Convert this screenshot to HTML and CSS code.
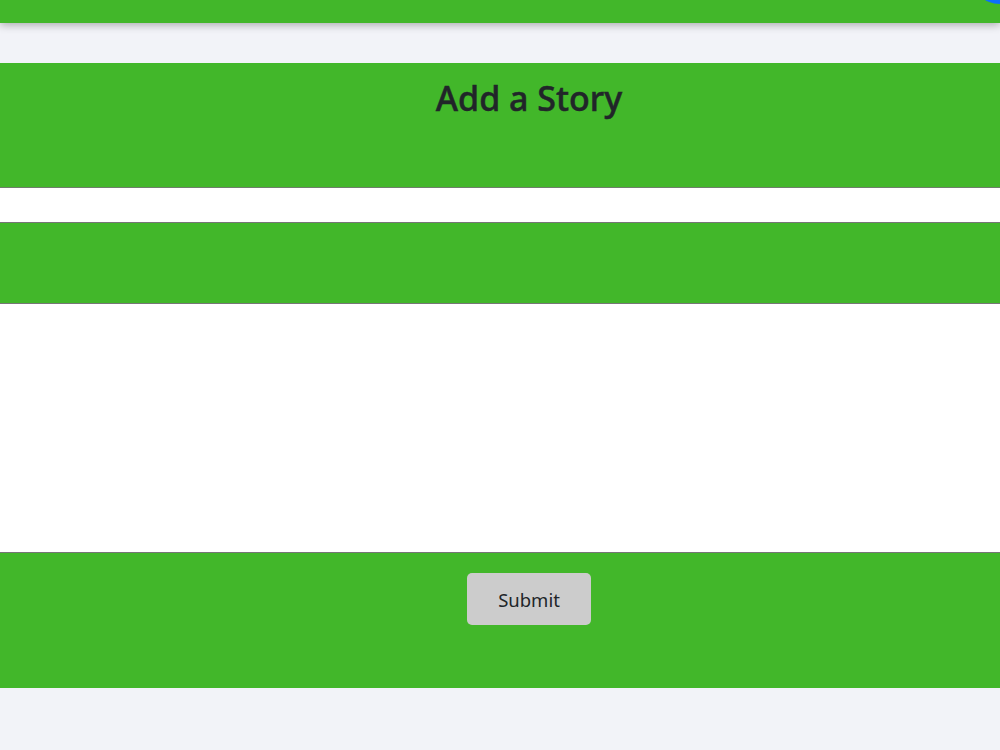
FILE: index.html
```html
<!DOCTYPE html>
<html lang="en">
<head>
<meta charset="utf-8">
<title>Add a Story</title>
<link rel="stylesheet" href="styles.css">
</head>
<body>
<header class="navbar"><span class="avatar"></span></header>
<main class="story-form">
  <section class="band band-title"><h1 class="title">Add a Story</h1></section>
  <div class="field field-short"></div>
  <section class="band band-label"></section>
  <div class="field field-tall"></div>
  <section class="band band-actions"><button class="submit" type="button">Submit</button></section>
</main>
</body>
</html>
```
FILE: styles.css
```css
html, body {
  margin: 0;
  padding: 0;
}
body {
  height: 750px;
  overflow: hidden;
  background: #f2f3f8;
  font-family: "Noto Sans", "Open Sans", sans-serif;
  color: #212529;
}
.navbar {
  position: relative;
  height: 23px;
  background: #42b72a;
  box-shadow: 0 2px 8px rgba(0, 0, 0, 0.3);
}
.avatar {
  position: absolute;
  top: -56px;
  right: -30px;
  width: 60px;
  height: 60px;
  border-radius: 50%;
  background: #0d6efd;
}
.story-form {
  margin-top: 40px;
  display: flex;
  flex-direction: column;
}
.band {
  box-sizing: border-box;
  background: #42b72a;
  padding-left: 58px;
  text-align: center;
}
.band-title {
  height: 125px;
  border-bottom: 1px solid #6f7f6b;
}
.title {
  margin: 13px 0 0;
  font-size: 34px;
  line-height: 44px;
  font-weight: 500;
  -webkit-text-stroke: 0.5px #212529;
}
.field {
  box-sizing: border-box;
  background: #fff;
  border-bottom: 1px solid #767676;
}
.field-short {
  height: 35px;
}
.band-label {
  height: 81px;
  border-bottom: 1px solid #767676;
}
.field-tall {
  height: 249px;
}
.band-actions {
  height: 135px;
  padding-top: 20px;
}
.submit {
  box-sizing: border-box;
  width: 124px;
  height: 52px;
  border: 0;
  border-radius: 5px;
  background: #cccccc;
  color: #212529;
  font-family: inherit;
  font-size: 18.5px;
  padding: 0;
}
```
